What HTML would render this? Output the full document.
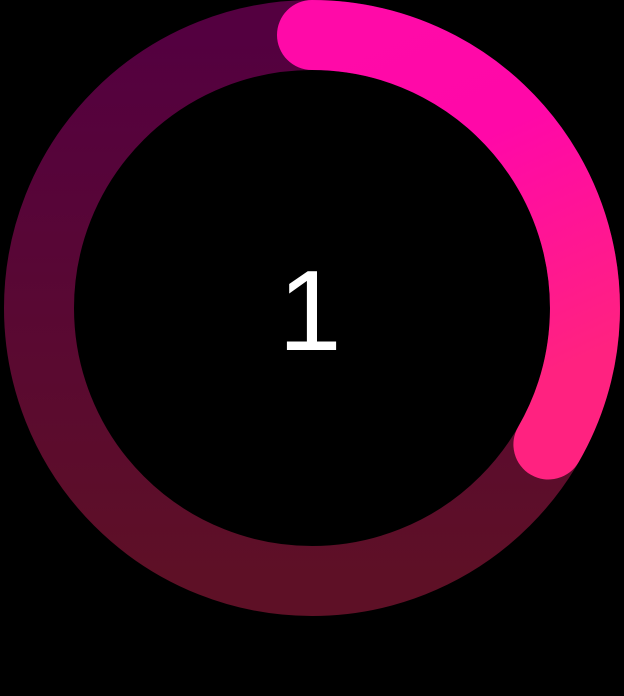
<!DOCTYPE html>
<html><head><meta charset="utf-8"><style>
html,body{margin:0;padding:0;background:#000;width:624px;height:696px;overflow:hidden}
</style></head><body>
<svg width="624" height="696" viewBox="0 0 624 696" xmlns="http://www.w3.org/2000/svg">
<defs>
<linearGradient id="tr" x1="0" y1="0" x2="0" y2="1">
<stop offset="0" stop-color="#540040"/>
<stop offset="1" stop-color="#5e1026"/>
</linearGradient>
<linearGradient id="pg" x1="0" y1="0" x2="0.3" y2="1">
<stop offset="0" stop-color="#ff0aa8"/>
<stop offset="0.4" stop-color="#ff08a8"/>
<stop offset="1" stop-color="#ff2280"/>
</linearGradient>
</defs>
<circle cx="312" cy="308" r="273" fill="none" stroke="url(#tr)" stroke-width="70"/>
<path d="M312 35 A273 273 0 0 1 548.4 444.5" fill="none" stroke="url(#pg)" stroke-width="70" stroke-linecap="round"/>
<text x="310" y="350" text-anchor="middle" fill="#fff" font-family="Liberation Sans, sans-serif" font-size="114">1</text>
</svg>
</body></html>
